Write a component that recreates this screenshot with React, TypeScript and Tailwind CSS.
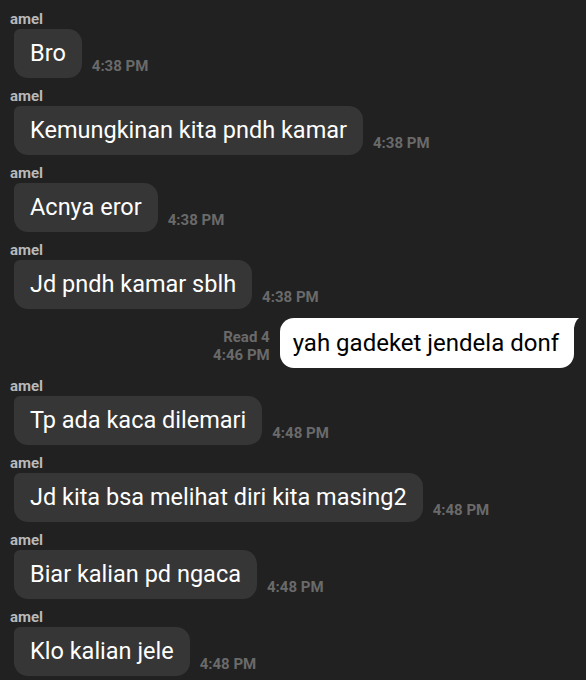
type Msg = {
  from: 'them' | 'me';
  text: string;
  time: string;
  read?: string;
};

const messages: Msg[] = [
  { from: 'them', text: 'Bro', time: '4:38 PM' },
  { from: 'them', text: 'Kemungkinan kita pndh kamar', time: '4:38 PM' },
  { from: 'them', text: 'Acnya eror', time: '4:38 PM' },
  { from: 'them', text: 'Jd pndh kamar sblh', time: '4:38 PM' },
  { from: 'me', text: 'yah gadeket jendela donf', time: '4:46 PM', read: 'Read 4' },
  { from: 'them', text: 'Tp ada kaca dilemari', time: '4:48 PM' },
  { from: 'them', text: 'Jd kita bsa melihat diri kita masing2', time: '4:48 PM' },
  { from: 'them', text: 'Biar kalian pd ngaca', time: '4:48 PM' },
  { from: 'them', text: 'Klo kalian jele', time: '4:48 PM' },
];

function TheirMessage({ msg }: { msg: Msg }) {
  return (
    <div className="pl-[10px]">
      <div className="text-[15px] font-bold leading-[14px] text-[#b9b9b9]">amel</div>
      <div className="mt-[3px] flex items-end pl-[4px]">
        <div className="rounded-[14px] rounded-tl-[6px] bg-[#363636] px-4 py-3 text-[23.5px] leading-[25px] text-white">
          {msg.text}
        </div>
        <span className="mb-[1px] ml-[10px] text-[15px] font-bold text-[#6a6a6a]">{msg.time}</span>
      </div>
    </div>
  );
}

function MyMessage({ msg }: { msg: Msg }) {
  return (
    <div className="mt-[-2px] flex items-end justify-end pr-[12px]">
      <div className="mb-[4px] mr-[10px] text-right text-[15px] font-bold leading-[18px] text-[#6a6a6a]">
        <div>{msg.read}</div>
        <div>{msg.time}</div>
      </div>
      <div className="relative">
        <div className="rounded-[14px] rounded-tr-[4px] bg-white pl-[13px] pr-[15px] py-3 text-[24px] leading-[26px] text-black">
          {msg.text}
        </div>
        <svg className="absolute right-[-5px] top-0" width="8" height="10" viewBox="0 0 8 10">
          <path d="M0 0 H8 C5 2 4 5 3 10 H0 Z" fill="#ffffff" />
        </svg>
      </div>
    </div>
  );
}

export default function App() {
  return (
    <div
      className="h-[680px] w-[586px] overflow-hidden bg-[#212121] pt-[12px]"
      style={{ fontFamily: 'Roboto, "Liberation Sans", sans-serif' }}
    >
      <div className="flex flex-col gap-[11px]">
        {messages.map((m, i) =>
          m.from === 'them' ? <TheirMessage key={i} msg={m} /> : <MyMessage key={i} msg={m} />
        )}
      </div>
    </div>
  );
}
